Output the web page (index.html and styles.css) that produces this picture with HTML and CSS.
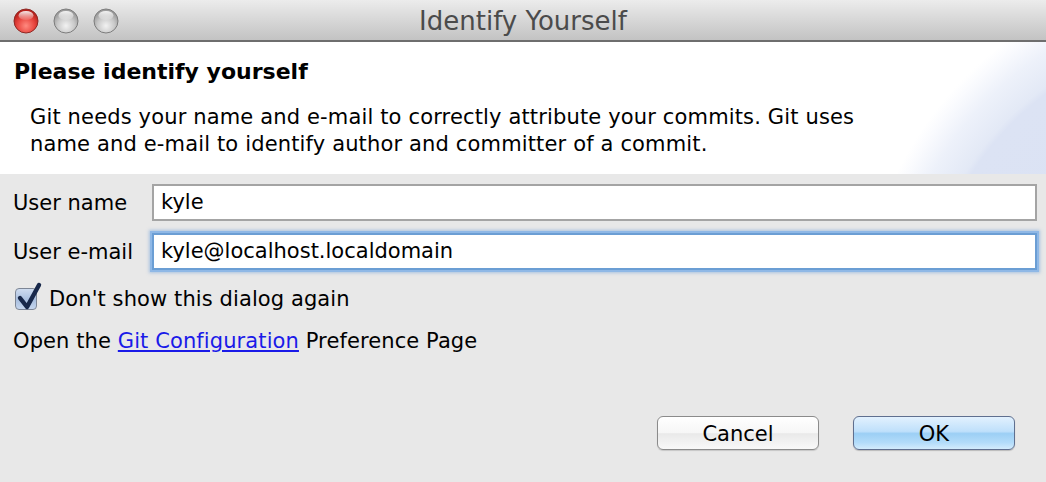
FILE: index.html
```html
<!DOCTYPE html>
<html>
<head>
<meta charset="utf-8">
<link rel="stylesheet" href="styles.css">
</head>
<body>
<div class="window">
  <div class="titlebar">
    <div class="lights">
      <svg class="light" viewBox="0 0 26 26" width="26" height="26">
        <defs>
          <radialGradient id="rg" cx="50%" cy="70%" r="60%">
            <stop offset="0" stop-color="#ff8a80"/>
            <stop offset="0.6" stop-color="#e8463f"/>
            <stop offset="1" stop-color="#b8211c"/>
          </radialGradient>
          <radialGradient id="gg" cx="50%" cy="70%" r="60%">
            <stop offset="0" stop-color="#f2f2f2"/>
            <stop offset="0.6" stop-color="#c9c9c9"/>
            <stop offset="1" stop-color="#9c9c9c"/>
          </radialGradient>
          <linearGradient id="hl" x1="0" y1="0" x2="0" y2="1">
            <stop offset="0" stop-color="#fff" stop-opacity="0.9"/>
            <stop offset="1" stop-color="#fff" stop-opacity="0.1"/>
          </linearGradient>
        </defs>
        <circle cx="13" cy="13" r="12" fill="url(#rg)" stroke="#8e2a26" stroke-width="1"/>
        <ellipse cx="13" cy="7.5" rx="7.5" ry="4.5" fill="url(#hl)"/>
      </svg>
      <svg class="light" viewBox="0 0 26 26" width="26" height="26">
        <circle cx="13" cy="13" r="12" fill="url(#gg)" stroke="#7d7d7d" stroke-width="1"/>
        <ellipse cx="13" cy="7.5" rx="7.5" ry="4.5" fill="url(#hl)"/>
      </svg>
      <svg class="light" viewBox="0 0 26 26" width="26" height="26">
        <circle cx="13" cy="13" r="12" fill="url(#gg)" stroke="#7d7d7d" stroke-width="1"/>
        <ellipse cx="13" cy="7.5" rx="7.5" ry="4.5" fill="url(#hl)"/>
      </svg>
    </div>
    <div class="title">Identify Yourself</div>
  </div>

  <div class="header">
    <div class="heading">Please identify yourself</div>
    <div class="desc">Git needs your name and e-mail to correctly attribute your commits. Git uses<br>name and e-mail to identify author and committer of a commit.</div>
  </div>

  <div class="form">
    <div class="fields">
      <label class="label">User name</label>
      <div class="input">kyle</div>
      <label class="label">User e-mail</label>
      <div class="input focused">kyle@localhost.localdomain</div>
    </div>

    <div class="check-row">
      <span class="checkbox">
        <svg viewBox="0 0 28 32" width="28" height="32" class="tick">
          <path d="M5 18 L12 27 L24 5" fill="none" stroke="#18284a" stroke-width="4.4" stroke-linecap="round" stroke-linejoin="round"/>
        </svg>
      </span>
      <span class="check-label">Don't show this dialog again</span>
    </div>

    <div class="link-row">Open the <a class="link" href="#">Git Configuration</a> Preference Page</div>

    <div class="buttons">
      <div class="btn cancel">Cancel</div>
      <div class="btn ok">OK</div>
    </div>
  </div>
</div>
</body>
</html>
```

FILE: styles.css
```css
html, body {
  margin: 0;
  padding: 0;
}
body {
  width: 1046px;
  height: 482px;
  overflow: hidden;
  background: #e8e8e8;
  font-family: "DejaVu Sans", "Liberation Sans", sans-serif;
  color: #000;
}
.window {
  display: flex;
  flex-direction: column;
  height: 482px;
}
.titlebar {
  height: 40px;
  flex: none;
  display: flex;
  align-items: center;
  position: relative;
  background: linear-gradient(#ececec, #d3d3d3 60%, #c3c3c3);
  border-bottom: 2px solid #6e6e6e;
}
.lights {
  display: flex;
  gap: 14px;
  padding-left: 13px;
  padding-top: 1px;
  position: relative;
  z-index: 1;
}
.light {
  display: block;
}
.title {
  position: absolute;
  left: 0;
  right: 0;
  top: 1px;
  height: 40px;
  line-height: 40px;
  text-align: center;
  font-size: 26px;
  color: #4b4b4b;
}
.header {
  height: 132px;
  flex: none;
  box-sizing: border-box;
  padding-top: 16px;
  background:
    radial-gradient(circle at 1222px 290px,
      #d9e1f3 0, #dce3f4 296px, #e3e9f6 302px, #edf1fa 330px, #fafbfe 352px, rgba(255,255,255,0) 362px),
    #fff;
}
.heading {
  padding-left: 14px;
  font-size: 22px;
  font-weight: bold;
  line-height: 28px;
}
.desc {
  margin-top: 18px;
  padding-left: 30px;
  font-size: 21px;
  line-height: 27px;
  letter-spacing: 0.15px;
}
.form {
  padding: 10px 0 0 13px;
  display: flex;
  flex-direction: column;
}
.fields {
  display: grid;
  grid-template-columns: 139px 885px;
  row-gap: 12px;
  align-items: center;
}
.label {
  font-size: 21px;
}
.input {
  box-sizing: border-box;
  height: 37px;
  border: 2px solid #a4a4a4;
  background: #fff;
  font-size: 21px;
  line-height: 33px;
  padding-left: 7px;
}
.input.focused {
  border: 2px solid #6b9ed4;
  box-shadow: 0 0 0 2px #8fb8e6, 0 0 3px 3px rgba(110, 160, 220, 0.5);
}
.check-row {
  margin-top: 18px;
  display: flex;
  align-items: center;
  gap: 12px;
  height: 22px;
}
.checkbox {
  box-sizing: border-box;
  width: 22px;
  height: 22px;
  margin-left: 2px;
  border: 1px solid #7d8696;
  border-radius: 4px;
  background: linear-gradient(#cfdcf0, #a9bfdf 55%, #c5d6ee);
  position: relative;
}
.tick {
  position: absolute;
  left: -1px;
  top: -9px;
}
.check-label {
  font-size: 21px;
  letter-spacing: 0.1px;
}
.link-row {
  margin-top: 17px;
  font-size: 21px;
  line-height: 28px;
  letter-spacing: 0.1px;
}
.link {
  color: #1a1ae8;
  text-decoration: underline;
}
.buttons {
  margin-top: 61px;
  display: flex;
  justify-content: flex-end;
  gap: 34px;
  padding-right: 31px;
}
.btn {
  box-sizing: border-box;
  width: 162px;
  height: 34px;
  border-radius: 6px;
  font-size: 21px;
  line-height: 34px;
  text-align: center;
}
.cancel {
  border: 1px solid #8b8b8b;
  background: linear-gradient(#ffffff, #f6f6f6 50%, #e9e9e9 52%, #f9f9f9);
  box-shadow: 0 1px 1px rgba(0,0,0,0.15);
}
.ok {
  border: 1px solid #5f6f8f;
  background: linear-gradient(#e2f1fe, #bfe0fb 45%, #9ccff5 52%, #b3dcfa 80%, #d3ecfd);
  box-shadow: 0 1px 1px rgba(0,0,0,0.2);
}
```
